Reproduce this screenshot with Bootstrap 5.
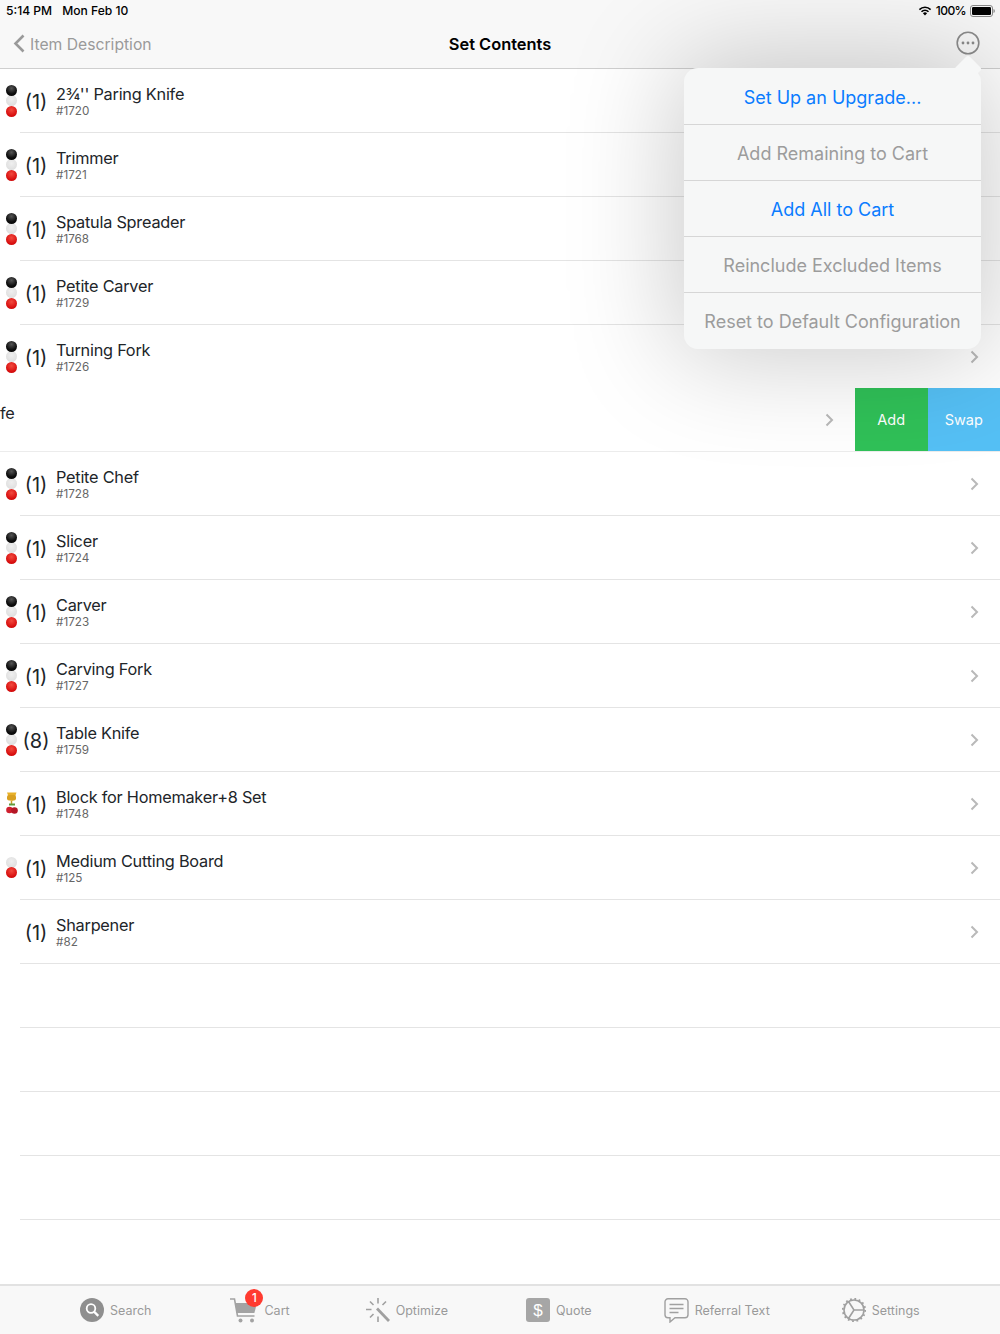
<!DOCTYPE html>
<html lang="en">
<head>
<meta charset="utf-8">
<title>Set Contents</title>
<link href="https://cdn.jsdelivr.net/npm/bootstrap@5.3.0/dist/css/bootstrap.min.css" rel="stylesheet">
<style>
html,body{height:100%}
body{font-family:Inter,"Liberation Sans",sans-serif;color:#000;background:#fff;overflow:hidden}
.app-shell{width:1000px;height:1334px;position:relative;overflow:hidden}
.top-head{height:69px;background:#f8f8f8;border-bottom:1px solid #cfcfcf}
.status-row{height:20px;padding:1px 5px 0 6px;font-size:12.1px;font-weight:500;line-height:20px}
.status-date{margin-left:10px}
.status-right{gap:4px}
.status-pct{letter-spacing:-.6px}
.nav-row{height:48px;padding:0 20px 2px 13px}
.back-text{color:#9a9a9a;font-size:15.7px;margin-left:5px;padding-top:3px}
.head-title{font-size:16.4px;font-weight:600;left:0;right:0;top:34px;line-height:20px;text-align:center;position:absolute}
.row-item{height:64px;border:0;padding:0;border-radius:0}
.dots-col{width:20px;padding-left:6px;padding-bottom:1px;flex:none}
.ball{width:11px;height:11px;border-radius:50%;display:block;margin-top:-.25px;margin-bottom:-.25px;position:relative;z-index:1}
.ball-black{background:radial-gradient(circle at 50% 30%,#555,#0c0c0c 60%)}
.ball-gray{background:radial-gradient(circle at 50% 40%,#efefef,#dcdcdc 85%);z-index:0}
.ball-red{background:radial-gradient(circle at 50% 35%,#f24a3e,#d80f0f 65%,#c00d0d)}
.row-main{border-bottom:1px solid #e4e4e4;height:64px;padding-right:21px;min-width:0}
.qty-text{width:32px;text-align:center;font-size:20px;line-height:22px;flex:none;margin-top:3px}
.name-wrap{margin-top:1px}
.name-text{font-size:16.3px;line-height:20px;display:block;letter-spacing:-.24px}
.sku-text{font-size:11.7px;line-height:14px;color:#666;display:block}
.chev{flex:none;display:block}
.swipe-row{height:64px;border-bottom:2px solid #ececec;border-top:1px solid #e4e4e4;margin-top:-1px}
.swipe-name{font-size:16.3px;line-height:20px;margin-top:-14px;letter-spacing:-.24px}
.swipe-fill{padding-right:21px}
.swipe-btn{width:72.5px;font-size:14.5px;color:#fff;border:0;border-radius:0;padding:0}
.swipe-add{background:#30c158}
.swipe-add:hover{background:#30c158;color:#fff}
.swipe-swap{background:#55c0f5}
.swipe-swap:hover{background:#55c0f5;color:#fff}
.blank-row{height:64px;margin-left:20px;border-bottom:1px solid #e4e4e4}
.tab-bar{position:absolute;left:0;right:0;bottom:0;height:50px;background:#f8f8f8;border-top:2px solid #e2e2e2;padding:0 0 0 80px;color:#9a9a9a;font-size:12.5px}
.tab-entry{gap:6px;position:relative;height:48px}
.tab-entry span{padding-top:2px}
.tab-cart{margin-left:79px}
.tab-opt{margin-left:76px}
.tab-quote{margin-left:78px}
.tab-ref{margin-left:72px}
.tab-set{margin-left:72px}
.cart-badge{position:absolute;left:15px;top:3px;width:18px;height:18px;border-radius:50%;background:#ff3b30;color:#fff;font-size:11.5px;line-height:18px;text-align:center;font-weight:500;padding-top:0!important}
.pop-menu{position:absolute;left:684px;top:68px;width:297px;height:281px;background:#f6f7f7;border-radius:14px;box-shadow:0 0 110px 8px rgba(0,0,0,.21);z-index:5}
.pop-tip{position:absolute;left:274px;top:-9px;width:20px;height:20px;background:#f6f7f7;transform:rotate(45deg);border-radius:3px}
.pop-list{position:relative;background:transparent;border-radius:14px;padding-top:1px}
.pop-entry{height:56px;background:transparent;border-color:#d6d6d6;font-size:18px;padding:1px 0 0;display:flex;align-items:center;justify-content:center;text-align:center}
.pop-on{color:#0a7cff}
.pop-off{color:#9c9c9c}
</style>
</head>
<body>
<div class="app-shell">
  <header class="top-head">
    <div class="status-row d-flex align-items-center">
      <span>5:14 PM</span><span class="status-date">Mon Feb 10</span>
      <span class="ms-auto d-flex align-items-center status-right">
        <svg width="14" height="11" viewBox="0 0 14 11"><path d="M7 10.6 4.9 8.3a3 3 0 0 1 4.2 0Z" fill="#000"/><path d="M3.5 6.8a5 5 0 0 1 7 0" fill="none" stroke="#000" stroke-width="1.6"/><path d="M1.4 4.6a8 8 0 0 1 11.2 0" fill="none" stroke="#000" stroke-width="1.6"/></svg>
        <span class="status-pct">100%</span>
        <svg width="25" height="12" viewBox="0 0 25 12"><rect x=".5" y=".5" width="22" height="11" rx="2.5" fill="none" stroke="#8a8a8a"/><rect x="2" y="2" width="19" height="8" rx="1.2" fill="#000"/><path d="M23.5 4v4c.9-.3 1.3-1 1.3-2s-.4-1.7-1.3-2Z" fill="#8a8a8a"/></svg>
      </span>
    </div>
    <div class="nav-row d-flex align-items-center">
      <svg width="12" height="19" viewBox="0 0 12 19"><path d="M10.5 1.5 2.5 9.5l8 8" fill="none" stroke="#9a9a9a" stroke-width="2.6"/></svg>
      <span class="back-text">Item Description</span>
      <span class="head-title">Set Contents</span>
      <svg class="ms-auto" width="24" height="24" viewBox="0 0 24 24"><circle cx="12" cy="12" r="10.8" fill="none" stroke="#8c8c8c" stroke-width="1.6"/><circle cx="7" cy="12" r="1.4" fill="#8c8c8c"/><circle cx="12" cy="12" r="1.4" fill="#8c8c8c"/><circle cx="17" cy="12" r="1.4" fill="#8c8c8c"/></svg>
    </div>
  </header>

  <ul class="list-group list-group-flush" id="rows"></ul>

  <nav class="tab-bar d-flex align-items-center">
    <div class="tab-entry d-flex align-items-center">
      <svg width="24" height="24" viewBox="0 0 24 24"><circle cx="12" cy="12" r="12" fill="#8f8f8f"/><circle cx="11" cy="10.5" r="4.3" fill="none" stroke="#fff" stroke-width="1.8"/><path d="m14 13.6 4.3 4.3" stroke="#fff" stroke-width="2.2"/></svg>
      <span>Search</span>
    </div>
    <div class="tab-entry tab-cart d-flex align-items-center">
      <svg width="28" height="26" viewBox="0 0 28 26"><path d="M0 2h4.5l3 17h17" fill="none" stroke="#a3a3a3" stroke-width="1.6"/><path d="M5 6h22l-2.6 10H7Z" fill="#a3a3a3"/><circle cx="10.500" cy="23.500" r="2" fill="#a3a3a3"/><circle cx="22" cy="23.500" r="2" fill="#a3a3a3"/></svg>
      <span>Cart</span>
      <span class="cart-badge">1</span>
    </div>
    <div class="tab-entry tab-opt d-flex align-items-center">
      <svg width="24" height="24" viewBox="0 0 24 24" fill="none" stroke="#a0a0a0" stroke-width="1.6"><path d="M12 0v5.500M12 18.500V24M0 11.500h5.500M4 3.500l3.500 3.500M4 19.500 7.500 16M20 3.500 16.500 7"/><path d="m11 10.500 12 12.500" stroke-width="2.800"/></svg>
      <span>Optimize</span>
    </div>
    <div class="tab-entry tab-quote d-flex align-items-center">
      <svg width="24" height="24" viewBox="0 0 24 24"><rect width="24" height="24" rx="3" fill="#a6a6a6"/><text x="12" y="18" font-size="17" text-anchor="middle" fill="#fff" font-family="Liberation Sans, sans-serif">$</text></svg>
      <span>Quote</span>
    </div>
    <div class="tab-entry tab-ref d-flex align-items-center">
      <svg width="25" height="25" viewBox="0 0 25 25" fill="none" stroke="#a0a0a0" stroke-width="1.4"><path d="M4 .8h17a3 3 0 0 1 3 3v13a3 3 0 0 1-3 3H11l-5 4.200V19.800H4a3 3 0 0 1-3-3v-13a3 3 0 0 1 3-3Z"/><path d="M5.500 6.500h14M5.500 10.500h14M5.500 14.500h9"/></svg>
      <span>Referral Text</span>
    </div>
    <div class="tab-entry tab-set d-flex align-items-center">
      <svg width="24" height="24" viewBox="0 0 24 24" fill="none" stroke="#a0a0a0"><circle cx="12" cy="12" r="10" stroke-width="1.600"/><circle cx="12" cy="12" r="11.200" stroke-width="1.800" stroke-dasharray="1.800 2.600"/><path d="M6.500 3.500 12 12 6.500 20.500M12 12h10" stroke-width="1.600"/></svg>
      <span>Settings</span>
    </div>
  </nav>

  <aside class="pop-menu">
    <div class="pop-tip"></div>
    <div class="list-group list-group-flush pop-list">
      <div class="list-group-item pop-entry pop-on">Set Up an Upgrade...</div>
      <div class="list-group-item pop-entry pop-off">Add Remaining to Cart</div>
      <div class="list-group-item pop-entry pop-on">Add All to Cart</div>
      <div class="list-group-item pop-entry pop-off">Reinclude Excluded Items</div>
      <div class="list-group-item pop-entry pop-off">Reset to Default Configuration</div>
    </div>
  </aside>
</div>
<script>
const chev='<svg class="chev" width="9" height="14" viewBox="0 0 9 14"><path d="M1.500 1.500 7 7l-5.500 5.500" fill="none" stroke="#b9b9b9" stroke-width="2"/></svg>';
const b=k=>'<span class="ball ball-'+k+'"></span>';
const all=b('black')+b('gray')+b('red');
const fruit='<svg width="12" height="23" viewBox="0 0 12 23"><path d="M1 0.500h9.500L8 7.500q-2 2.500-4.500 0Z" fill="#e8b12a"/><rect x="1" y="3" width="9" height="5.500" rx="2" fill="#d9a020"/><path d="M5.500 9v3.500" stroke="#c79a2a" stroke-width="1.500"/><path d="M3 12.500h6" stroke="#5f9a3c" stroke-width="2"/><circle cx="3.500" cy="18" r="3.300" fill="#cf1f2e"/><circle cx="8.500" cy="18.500" r="3.300" fill="#b51625"/></svg>';
const data=[["2¾'' Paring Knife","1720",all],["Trimmer","1721",all],["Spatula Spreader","1768",all],["Petite Carver","1729",all],["Turning Fork","1726",all],null,["Petite Chef","1728",all],["Slicer","1724",all],["Carver","1723",all],["Carving Fork","1727",all],["Table Knife","1759",all,8],["Block for Homemaker+8 Set","1748",fruit],["Medium Cutting Board","125",b('gray')+b('red')],["Sharpener","82",""]];
let h='';
for(const d of data){
  if(!d){h+='<li class="list-group-item row-item swipe-row d-flex"><div class="swipe-fill flex-grow-1 d-flex align-items-center justify-content-between"><span class="swipe-name">fe</span>'+chev+'</div><button class="btn swipe-btn swipe-add">Add</button><button class="btn swipe-btn swipe-swap">Swap</button></li>';continue;}
  h+='<li class="list-group-item row-item d-flex"><div class="dots-col d-flex flex-column justify-content-center">'+d[2]+'</div><div class="row-main flex-grow-1 d-flex align-items-center"><span class="qty-text">('+(d[3]||1)+')</span><div class="name-wrap flex-grow-1 ms-1"><span class="name-text">'+d[0]+'</span><span class="sku-text">#'+d[1]+'</span></div>'+chev+'</div></li>';
}
for(let i=0;i<5;i++)h+='<li class="list-group-item row-item blank-row"></li>';
document.getElementById('rows').innerHTML=h;
</script>
<script src="https://cdn.jsdelivr.net/npm/bootstrap@5.3.0/dist/js/bootstrap.bundle.min.js"></script>
</body>
</html>
